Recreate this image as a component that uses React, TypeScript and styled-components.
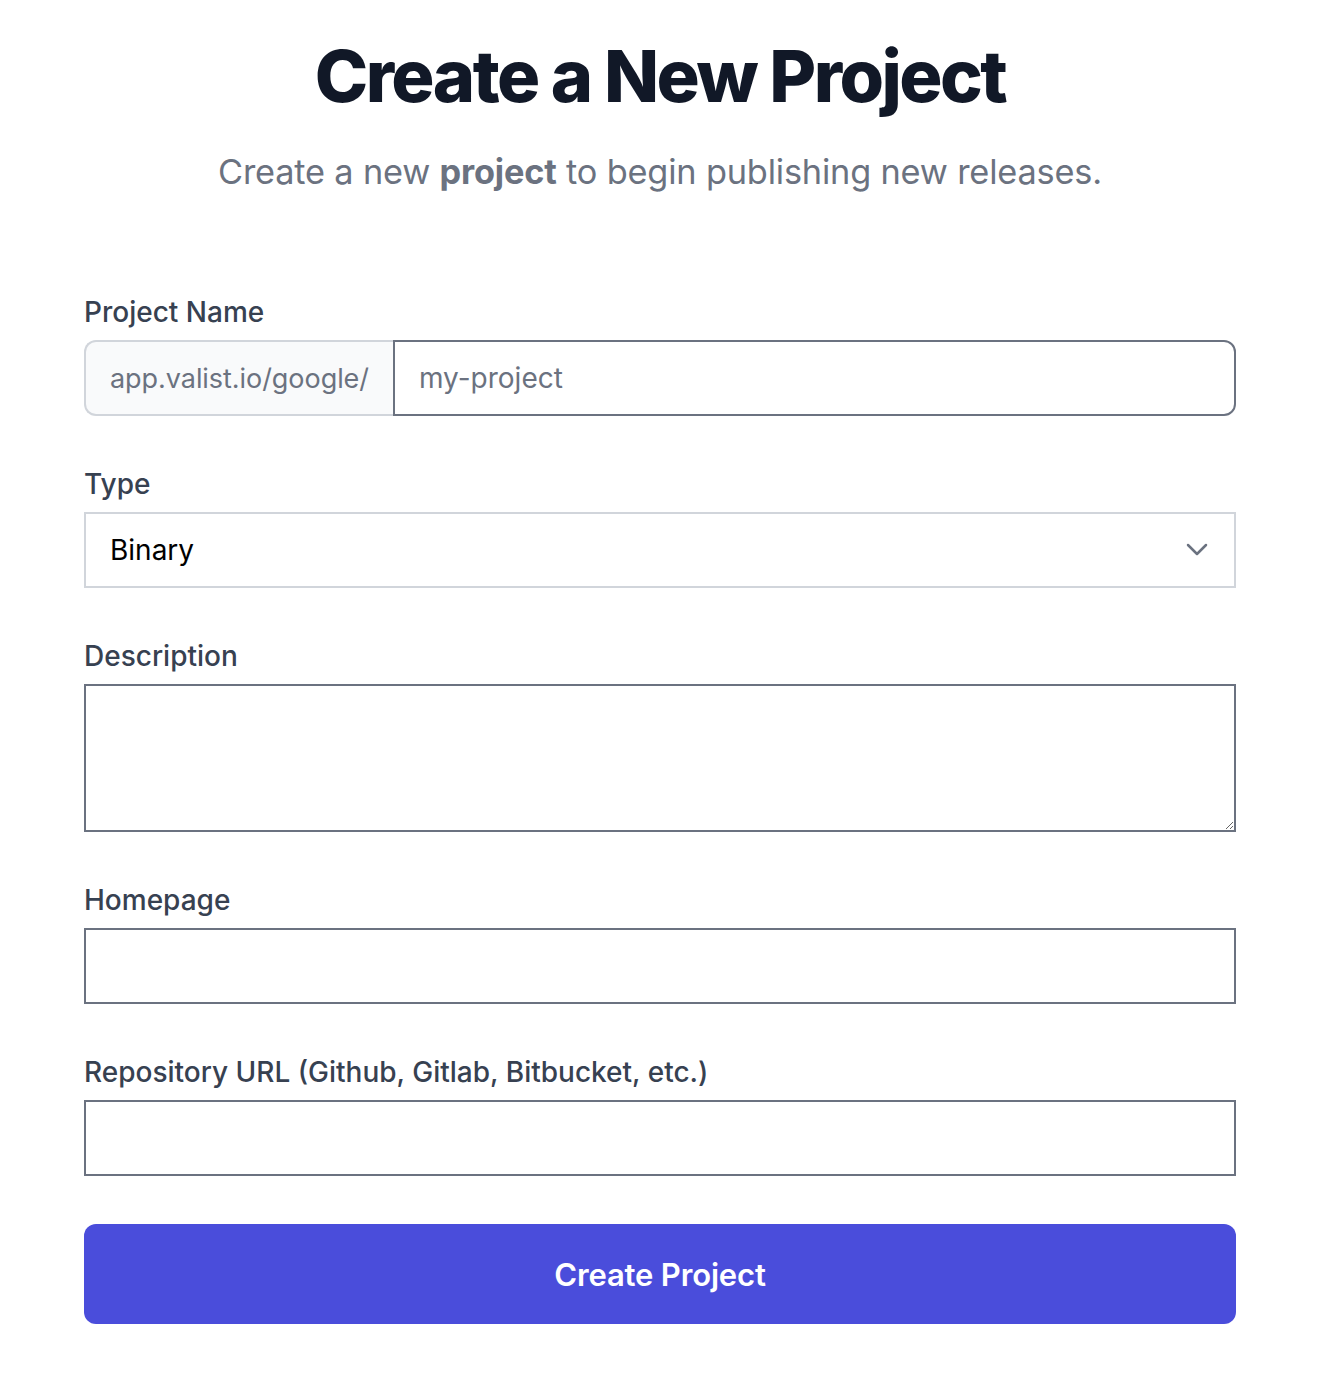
import React from "react";
import styled, { createGlobalStyle } from "styled-components";

const Global = createGlobalStyle`
  html, body { margin: 0; padding: 0; background: #ffffff; }
  body { font-family: Inter, "Noto Sans", sans-serif; -webkit-font-smoothing: antialiased; }
  * { box-sizing: border-box; }
`;

const Page = styled.div`
  width: 1152px;
  margin-left: 84px;
  padding-top: 36px;
  padding-bottom: 54px;
`;

const Header = styled.header`
  text-align: center;
`;

const Title = styled.h1`
  margin: 0;
  font-size: 72px;
  line-height: 80px;
  font-weight: 800;
  letter-spacing: -0.035em;
  color: #111827;
`;

const Subtitle = styled.p`
  margin: 28px 0 0;
  font-size: 34.3px;
  line-height: 56px;
  color: #6b7280;
  letter-spacing: -0.005em;

  strong {
    font-weight: 700;
    color: #6b7280;
  }
`;

const Form = styled.form`
  margin-top: 92px;
  display: flex;
  flex-direction: column;
  gap: 48px;
`;

const Field = styled.div`
  display: flex;
  flex-direction: column;
  gap: 8px;
`;

const Label = styled.label`
  font-size: 28px;
  line-height: 40px;
  font-weight: 500;
  color: #374151;
`;

const Group = styled.div`
  display: flex;
  height: 76px;
`;

const Prefix = styled.span`
  display: flex;
  align-items: center;
  padding: 0 24px;
  background: #f9fafb;
  border: 2px solid #d1d5db;
  border-right: none;
  border-radius: 12px 0 0 12px;
  font-size: 27px;
  letter-spacing: -0.002em;
  color: #6b7280;
  white-space: nowrap;
`;

const baseInput = `
  width: 100%;
  font-family: Inter, "Noto Sans", sans-serif;
  font-size: 28px;
  padding: 0 24px;
  background: #ffffff;
  border: 2px solid #6b7280;
  outline: none;
  color: #111827;
`;

const GroupInput = styled.input`
  ${baseInput}
  flex: 1;
  height: 76px;
  border-radius: 0 12px 12px 0;
  &::placeholder { color: #6b7280; opacity: 1; }
`;

const TextInput = styled.input`
  ${baseInput}
  height: 76px;
  border-radius: 0;
`;

const TextArea = styled.textarea`
  ${baseInput}
  height: 148px;
  padding: 16px 24px;
  resize: vertical;
  display: block;
`;

const SelectWrap = styled.div`
  position: relative;
  height: 76px;
`;

const Select = styled.select`
  ${baseInput}
  appearance: none;
  height: 76px;
  border: 2px solid #d1d5db;
  border-radius: 0;
  color: #000000;
  font-size: 28px;
`;

const Chevron = styled.svg`
  position: absolute;
  right: 27px;
  top: 50%;
  transform: translateY(-50%);
  pointer-events: none;
`;

const Button = styled.button`
  height: 100px;
  border: none;
  border-radius: 12px;
  background: #4a4ddb;
  color: #ffffff;
  font-family: Inter, "Noto Sans", sans-serif;
  font-size: 31px;
  font-weight: 600;
  letter-spacing: -0.005em;
  cursor: pointer;
`;

export default function App() {
  return (
    <>
      <Global />
      <Page>
        <Header>
          <Title>Create a New Project</Title>
          <Subtitle>
            Create a new <strong>project</strong> to begin publishing new releases.
          </Subtitle>
        </Header>
        <Form onSubmit={(e) => e.preventDefault()}>
          <Field>
            <Label>Project Name</Label>
            <Group>
              <Prefix>app.valist.io/google/</Prefix>
              <GroupInput placeholder="my-project" />
            </Group>
          </Field>
          <Field>
            <Label>Type</Label>
            <SelectWrap>
              <Select defaultValue="Binary">
                <option>Binary</option>
              </Select>
              <Chevron width="24" height="24" viewBox="0 0 24 24" fill="none">
                <path d="M3 7l9 9 9-9" stroke="#6b7280" strokeWidth="2.5" strokeLinecap="round" strokeLinejoin="round" />
              </Chevron>
            </SelectWrap>
          </Field>
          <Field>
            <Label>Description</Label>
            <TextArea />
          </Field>
          <Field>
            <Label>Homepage</Label>
            <TextInput />
          </Field>
          <Field>
            <Label>Repository URL (Github, Gitlab, Bitbucket, etc.)</Label>
            <TextInput />
          </Field>
          <Button type="submit">Create Project</Button>
        </Form>
      </Page>
    </>
  );
}
